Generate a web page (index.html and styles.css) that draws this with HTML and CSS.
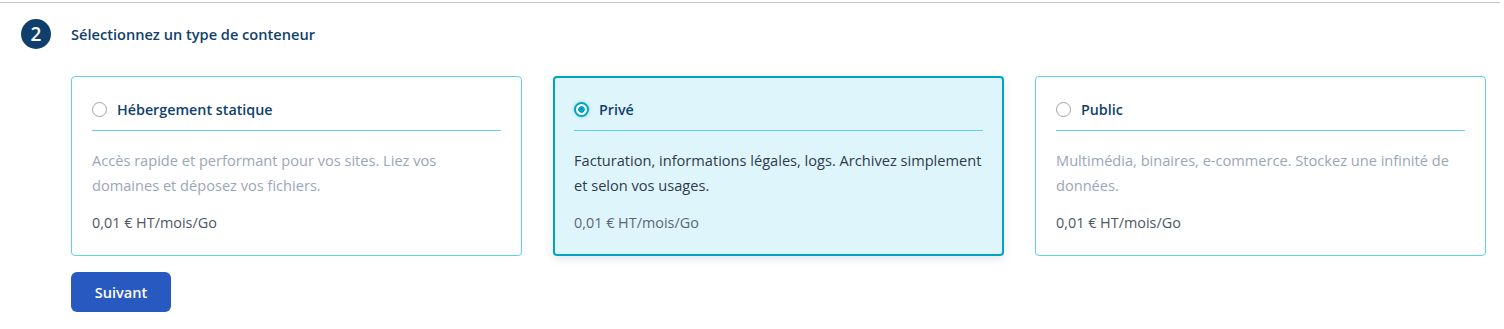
FILE: index.html
```html
<!DOCTYPE html>
<html lang="fr">
<head>
<meta charset="utf-8">
<link rel="stylesheet" href="styles.css">
</head>
<body>
<div class="topline"></div>
<section class="step">
  <div class="step-head">
    <span class="step-num">2</span>
    <h2 class="step-title">Sélectionnez un type de conteneur</h2>
  </div>
  <div class="step-body">
    <div class="cards">
      <div class="card">
        <div class="card-head"><span class="radio"></span><span class="card-title">Hébergement statique</span></div>
        <p class="card-desc">Accès rapide et performant pour vos sites. Liez vos domaines et déposez vos fichiers.</p>
        <p class="card-price">0,01 € HT/mois/Go</p>
      </div>
      <div class="card selected">
        <div class="card-head"><span class="radio checked"></span><span class="card-title">Privé</span></div>
        <p class="card-desc">Facturation, informations légales, logs. Archivez simplement et selon vos usages.</p>
        <p class="card-price">0,01 € HT/mois/Go</p>
      </div>
      <div class="card">
        <div class="card-head"><span class="radio"></span><span class="card-title">Public</span></div>
        <p class="card-desc">Multimédia, binaires, e-commerce. Stockez une infinité de données.</p>
        <p class="card-price">0,01 € HT/mois/Go</p>
      </div>
    </div>
    <button class="btn">Suivant</button>
  </div>
</section>
</body>
</html>
```
FILE: styles.css
```css
* { box-sizing: border-box; }
html, body { margin: 0; padding: 0; background: #fff; }
body { font-family: "Open Sans", "Liberation Sans", sans-serif; color: #4d5766; }
.topline { height: 1px; background: #c4c4c4; margin-top: 2px; margin-right: 4px; }
.step { padding: 16px 20px 0 21px; }
.step-head { display: flex; align-items: center; gap: 20px; }
.step-num {
  width: 30px; height: 30px; border-radius: 50%;
  background: #113f6d; color: #fff;
  display: flex; align-items: center; justify-content: center;
  font-size: 19px; font-weight: 600;
}
.step-title { margin: 0; font-size: 14.6px; font-weight: 600; color: #113f6d; }
.step-body { padding-left: 50px; margin-top: 27px; }
.cards { display: grid; grid-template-columns: repeat(3, 451px); column-gap: 31px; }
.card {
  height: 180px; border: 1px solid #5fd0ef; border-radius: 4px;
  padding: 22px 20px 0 20px; background: #fff;
}
.card.selected {
  border: 2px solid #00a3c4; background: #def5fb;
  padding: 21px 19px 0 19px;
  box-shadow: 0 3px 8px rgba(0, 50, 100, 0.12);
}
.card-head {
  display: flex; align-items: center; gap: 10px;
  height: 32px; padding-bottom: 11px;
  border-bottom: 1px solid #5fd0ef;
}
.radio {
  width: 15px; height: 15px; border-radius: 50%;
  border: 1px solid #a3a3a3; background: #fff; flex: none;
}
.radio.checked {
  border: 2px solid #00a3c4;
  background: radial-gradient(circle, #00a3c4 0 3px, #fff 3.5px);
  box-shadow: 0 0 3px rgba(0, 163, 196, 0.5);
}
.card-title { font-size: 14.3px; font-weight: 600; color: #113f6d; }
.card-desc { margin: 17px 0 0; font-size: 14.6px; line-height: 25px; color: #9aa6b9; }
.card-price { margin: 15px 0 0; font-size: 14.4px; color: #4d5766; }
.selected .card-desc { color: #2f3b4c; }
.selected .card-price { color: #5c6675; }
.btn {
  margin-top: 16px; width: 100px; height: 40px;
  border: none; border-radius: 6px; background: #2859c0; color: #fff;
  font-family: inherit; font-size: 14.6px; font-weight: 600; cursor: pointer;
}
```
